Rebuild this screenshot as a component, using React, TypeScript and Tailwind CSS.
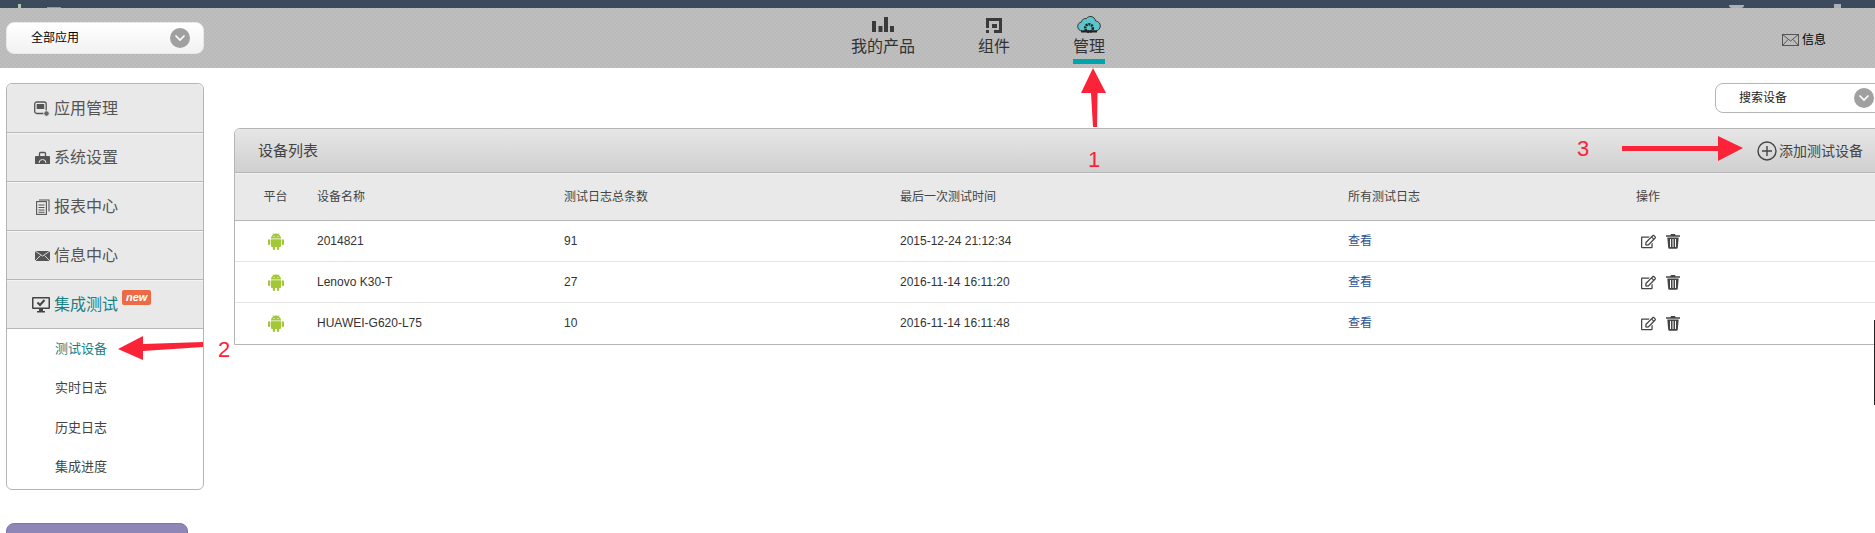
import { FaRegEdit } from "react-icons/fa";

const FONT = "font-['Liberation_Sans','Noto_Sans_CJK_SC',sans-serif]";

const devices = [
  { name: "2014821", count: "91", time: "2015-12-24 21:12:34" },
  { name: "Lenovo K30-T", count: "27", time: "2016-11-14 16:11:20" },
  { name: "HUAWEI-G620-L75", count: "10", time: "2016-11-14 16:11:48" },
];

const Chevron = ({ className }: { className: string }) => (
  <span className={"flex items-center justify-center rounded-full bg-[#a0a0a0] " + className}>
    <svg width="12" height="8" viewBox="0 0 12 8" fill="none" stroke="#fff" strokeWidth="1.6">
      <path d="M1.5 1.5 6 6l4.5-4.5" />
    </svg>
  </span>
);

const BarsIcon = () => (
  <svg width="22" height="16" viewBox="0 0 22 16" fill="#3a3a3a">
    <rect x="0" y="4" width="4" height="11" />
    <rect x="6.5" y="9" width="4" height="6" />
    <rect x="12" y="0" width="4" height="15" />
    <rect x="18" y="9" width="4" height="6" />
  </svg>
);

const ModuleIcon = () => (
  <svg width="16" height="15" viewBox="0 0 16 15" fill="#3a3a3a">
    <rect x="0" y="0" width="16" height="3" />
    <rect x="0" y="3" width="3" height="7" />
    <rect x="13" y="3" width="3" height="12" />
    <rect x="8" y="12" width="8" height="3" />
    <rect x="6" y="6" width="5" height="4" />
    <rect x="0" y="12" width="3" height="3" />
  </svg>
);

const CloudIcon = () => (
  <svg width="24" height="17" viewBox="0 0 24 17">
    <path
      d="M5.5 15C2.5 15 .7 12.8.7 10.4c0-2.200 1.600-4 3.700-4.300C5 3.400 7.200 2 9.400 2.600 10.600 1 12.300.3 14 .5c2.500.3 4.200 2.200 4.500 4.400 2.700.3 4.800 2.400 4.800 5 0 2.800-2.200 5.100-5 5.100z"
      fill="#5cc5cb"
      stroke="#333"
      strokeWidth="1"
    />
    <circle cx="12" cy="12" r="3.800" fill="none" stroke="#222" strokeWidth="2.600" strokeDasharray="2 .8" />
    <rect x="4" y="14.500" width="16" height="2" fill="#222" />
  </svg>
);

const AppIcon = () => (
  <svg width="16" height="16" viewBox="0 0 16 16" fill="none">
    <rect x=".7" y="1" width="11.500" height="11.500" rx="2" stroke="#555" strokeWidth="1.300" />
    <rect x="2.700" y="3" width="7.500" height="5" fill="#555" />
    <circle cx="12.500" cy="12.500" r="2.800" fill="#666" stroke="#e9e9e9" />
  </svg>
);

const ToolboxIcon = () => (
  <svg width="15" height="14" viewBox="0 0 15 14">
    <path d="M1 5h13a1 1 0 0 1 1 1v7H0V6a1 1 0 0 1 1-1z" fill="#555" />
    <path d="M4.500 5V2.500a1 1 0 0 1 1-1h4a1 1 0 0 1 1 1V5" fill="none" stroke="#555" strokeWidth="1.300" />
    <path d="M4 12a3.500 3.500 0 0 1 7 0" fill="none" stroke="#e9e9e9" strokeWidth="1" />
  </svg>
);

const ReportIcon = () => (
  <svg width="14" height="16" viewBox="0 0 14 16" fill="none" stroke="#555" strokeWidth="1.100">
    <rect x=".6" y="2.600" width="9.800" height="12.800" />
    <path d="M3 1H13v11.500M2.500 6h6M2.500 8.500h6M2.500 11h6M2.500 13.300h6" />
  </svg>
);

const MailIcon = () => (
  <svg width="15" height="10" viewBox="0 0 15 10">
    <rect width="15" height="10" fill="#555" />
    <path d="M0 0l7.500 5L15 0M0 10l5.500-5.500M15 10 9.500 4.500" fill="none" stroke="#e9e9e9" strokeWidth=".9" />
  </svg>
);

const MonitorIcon = () => (
  <svg width="18" height="16" viewBox="0 0 18 16">
    <path d="M1 0h16a1 1 0 0 1 1 1v10a1 1 0 0 1-1 1H11v2h2v1.500H5V14h2v-2H1a1 1 0 0 1-1-1V1a1 1 0 0 1 1-1z" fill="#444" />
    <rect x="1.500" y="1.500" width="15" height="9" fill="#e9e9e9" />
    <path d="M5.500 5.500 8 8l4.500-5" fill="none" stroke="#444" strokeWidth="2" />
  </svg>
);

const AndroidIcon = () => (
  <svg width="16" height="17" viewBox="0 0 16 17" fill="#a4c639" className="mx-auto">
    <path d="M3 5.500a5 5 0 0 1 10 0z" />
    <path d="M5 .3 6.200 2M11 .3 9.800 2" stroke="#a4c639" strokeWidth=".8" />
    <path d="M3 6.200h10v6.800a1 1 0 0 1-1 1H4a1 1 0 0 1-1-1z" />
    <rect x="0" y="6.200" width="2.300" height="6" rx="1.100" />
    <rect x="13.700" y="6.200" width="2.300" height="6" rx="1.100" />
    <rect x="4.800" y="13" width="2.300" height="4" rx="1.100" />
    <rect x="8.900" y="13" width="2.300" height="4" rx="1.100" />
    <circle cx="6" cy="3.500" r=".6" fill="#fff" />
    <circle cx="10" cy="3.500" r=".6" fill="#fff" />
  </svg>
);

const TrashIcon = () => (
  <svg width="14" height="15" viewBox="0 0 14 15" fill="#444">
    <path d="M5 0h4l.6 1.300H14v1.400H0V1.300h4.400z" />
    <path d="M1.300 3.500h11.400l-.9 10.100a1.300 1.300 0 0 1-1.300 1.200H3.500a1.300 1.300 0 0 1-1.300-1.200z" />
    <path d="M4.500 5v8M7 5v8M9.500 5v8" stroke="#fff" strokeWidth="1" />
  </svg>
);

const SideItem = ({
  icon,
  label,
  active,
  badge,
  first,
}: {
  icon: React.ReactNode;
  label: string;
  active?: boolean;
  badge?: boolean;
  first?: boolean;
}) => (
  <div
    className={
      "flex h-[49px] items-center bg-[#e9e9e9] border-b border-b-[#b8b8b8] border-t border-t-[#f5f5f5] " +
      (first ? "rounded-t-md border-t-0 pt-[2px]" : "")
    }
  >
    <span className="flex w-[47px] shrink-0 justify-end pr-[4px]">{icon}</span>
    <span className={"text-base " + (active ? "text-[#1b7f86]" : "text-[#555]")}>{label}</span>
    {badge && (
      <span className="mb-[14px] ml-[4px] rounded-[2px] bg-[#ec6a45] px-[4px] text-[11px] leading-[15px] font-bold italic text-white">
        new
      </span>
    )}
  </div>
);

export default function App() {
  return (
    <div className={"relative h-[533px] w-[1875px] overflow-hidden bg-white text-xs text-[#333] " + FONT}>
      {/* top strip */}
      <div className="flex h-2 items-end overflow-hidden bg-[#3c4a5e]">
        <span className="ml-[18px] h-[4px] w-[3px] bg-[#a9c9b0]"></span>
        <span className="ml-[26px] h-[1px] w-[14px] bg-[#8f98a4]"></span>
        <span className="ml-[1668px] h-[3px] w-[15px] rounded-b-full bg-[#aab1ba]"></span>
        <span className="ml-[90px] h-[4px] w-[7px] bg-[#aab1ba]"></span>
      </div>

      <header className="flex h-[60px] bg-[repeating-conic-gradient(#b9b9b9_0_25%,#bfbfbf_0_50%)] bg-[length:4px_4px] pl-[6px]">
        <div className="mt-[14px] flex h-8 w-[198px] items-center justify-between rounded-lg border border-[#e8e8e8] bg-gradient-to-b from-white to-[#f2f2f2] pr-[13px] pl-[24px] text-black">
          全部应用
          <Chevron className="h-5 w-5" />
        </div>

        <nav className="ml-[647px] flex gap-[63px] text-base leading-[20px] text-[#333]">
          <div className="flex w-16 flex-col items-center pt-[9px]">
            <span className="flex h-4 items-end">
              <BarsIcon />
            </span>
            <span className="mt-[4px]">我的产品</span>
          </div>
          <div className="flex w-8 flex-col items-center pt-[9px]">
            <span className="flex h-4 items-end">
              <ModuleIcon />
            </span>
            <span className="mt-[4px]">组件</span>
          </div>
          <div className="flex w-8 flex-col items-center pt-[9px]">
            <span className="flex h-4 items-end">
              <CloudIcon />
            </span>
            <span className="mt-[4px]">管理</span>
            <span className="mt-[2px] h-[5px] w-8 bg-[#00a4ad]"></span>
          </div>
        </nav>

        <div className="mt-[22px] ml-[677px] flex h-[20px] items-center gap-[3px] text-black">
          <svg width="17" height="12" viewBox="0 0 17 12" fill="none" stroke="#555" strokeWidth="1">
            <rect x=".5" y=".5" width="16" height="11" />
            <path d="M.5.500 8.500 7l8-6.500M.5 11.500 6 5.500M16.500 11.500 11 5.500" />
          </svg>
          信息
        </div>
      </header>

      <div className="flex">
        {/* sidebar */}
        <aside className="ml-[6px] w-[198px] shrink-0 pt-[15px]">
          <div className="rounded-md border border-[#b5b5b5]">
            <SideItem first icon={<AppIcon />} label="应用管理" />
            <SideItem icon={<ToolboxIcon />} label="系统设置" />
            <SideItem icon={<ReportIcon />} label="报表中心" />
            <SideItem icon={<MailIcon />} label="信息中心" />
            <SideItem active badge icon={<MonitorIcon />} label="集成测试" />
            <ul className="text-[13px] leading-[40px] text-[#444]">
              <li className="h-[39px] pl-[48px] text-[#1b7f86]">测试设备</li>
              <li className="h-[40px] pl-[48px]">实时日志</li>
              <li className="h-[39px] pl-[48px]">历史日志</li>
              <li className="h-[42px] pl-[48px]">集成进度</li>
            </ul>
          </div>
          <div className="mt-[33px] h-[30px] w-[182px] rounded-lg border border-[#7f76a8] bg-[#8f86b8]"></div>
        </aside>

        {/* main */}
        <main className="ml-[30px] w-[1660px] shrink-0 pt-[15px]">
          <div className="ml-[1481px] flex h-[30px] w-[170px] items-center justify-between rounded-lg border border-[#b5b5b5] bg-white pr-[10px] pl-[23px] text-[#222]">
            搜索设备
            <Chevron className="h-5 w-5" />
          </div>

          <section className="mt-[15px] rounded-t-md border border-[#b5b5b5]">
            <div className="flex h-[44px] items-center justify-between whitespace-nowrap rounded-t-md border-b border-[#b5b5b5] bg-gradient-to-b from-[#e6e6e6] to-[#d0d0d0] pr-[30px] pl-[23px]">
              <h2 className="text-[15px] font-normal text-[#444]">设备列表</h2>
              <button className="flex items-center gap-[2px] text-sm text-[#444]">
                <svg width="20" height="20" viewBox="0 0 20 20" fill="none" stroke="#444" strokeWidth="1.400">
                  <circle cx="10" cy="10" r="9" />
                  <path d="M10 5v10M5 10h10" />
                </svg>
                添加测试设备
              </button>
            </div>

            <table className="w-full table-fixed border-collapse">
              <colgroup>
                <col className="w-[70px]" />
                <col className="w-[247px]" />
                <col className="w-[336px]" />
                <col className="w-[448px]" />
                <col className="w-[288px]" />
                <col />
              </colgroup>
              <thead>
                <tr className="h-[47px] border-b border-b-[#b5b5b5] border-t border-t-[#f2f2f2] bg-[#e9e9e9] text-left text-[#444]">
                  <th className="pl-[11px] text-center font-normal">平台</th>
                  <th className="pl-3 font-normal">设备名称</th>
                  <th className="pl-3 font-normal">测试日志总条数</th>
                  <th className="pl-3 font-normal">最后一次测试时间</th>
                  <th className="pl-3 font-normal">所有测试日志</th>
                  <th className="pl-3 font-normal">操作</th>
                </tr>
              </thead>
              <tbody>
                {devices.map((d, i) => (
                  <tr key={d.name} className={"h-[41px] " + (i < 2 ? "border-b border-[#e5e5e5]" : "")}>
                    <td className="pl-[11px]">
                      <AndroidIcon />
                    </td>
                    <td className="pl-3">{d.name}</td>
                    <td className="pl-3">{d.count}</td>
                    <td className="pl-3">{d.time}</td>
                    <td className="pl-3 text-[#2a5394]">查看</td>
                    <td className="pl-3">
                      <div className="flex items-center gap-[10px] pl-[5px]">
                        <FaRegEdit className="text-[15px] text-[#444]" />
                        <TrashIcon />
                      </div>
                    </td>
                  </tr>
                ))}
              </tbody>
            </table>
          </section>
        </main>
      </div>

      {/* annotations drawn over the screenshot */}
      <svg className="absolute top-0 left-0" width="1875" height="533" fill="#fb2337" stroke="none">
        <path d="M1093 68 1106 93H1097.500L1097 127H1093L1091 93H1081z" />
        <path d="M118 349 143 336V344L203 342V347L143 351V360z" />
        <path d="M1622 146H1718V136L1743 148 1718 161V151H1622z" />
      </svg>
      <span className="absolute top-[147px] left-[1088px] text-[22px] leading-[26px] font-light text-[#fb2337]">1</span>
      <span className="absolute top-[337px] left-[218px] text-[22px] leading-[26px] font-light text-[#fb2337]">2</span>
      <span className="absolute top-[136px] left-[1577px] text-[22px] leading-[26px] font-light text-[#fb2337]">3</span>
      <span className="absolute top-[320px] right-0 h-[85px] w-px bg-[#222]"></span>
    </div>
  );
}
